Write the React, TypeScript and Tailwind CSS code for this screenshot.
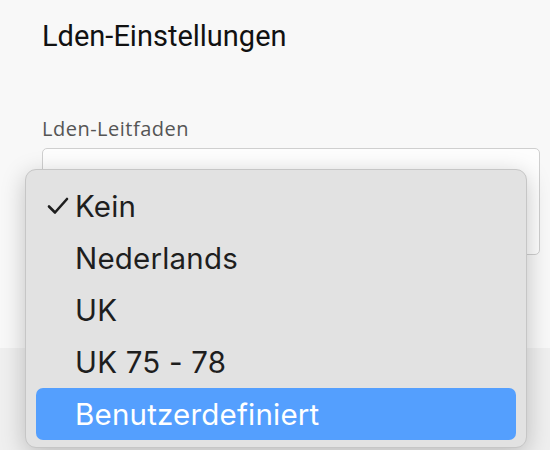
const options = ["Kein", "Nederlands", "UK", "UK 75 - 78", "Benutzerdefiniert"];

function Check() {
  return (
    <svg width="22" height="18" viewBox="0 0 22 18" className="text-[#1e1e1e]">
      <path d="M2 9.5 L8 15.5 L20 2" fill="none" stroke="currentColor" strokeWidth="2.6" strokeLinecap="round" strokeLinejoin="round" />
    </svg>
  );
}

function OptionMenu({ selected, active }: { selected: string; active: string }) {
  return (
    <div className="absolute left-[25px] top-[169px] h-[279px] w-[502px] rounded-[11px] border border-[#c6c6c6] bg-[#e2e2e2] px-[10px] pt-[10px] shadow-[0_6px_24px_rgba(0,0,0,0.22)]">
      {options.map((opt) => {
        const isActive = opt === active;
        return (
          <div
            key={opt}
            className={`flex h-[52px] items-center rounded-[7px] ${isActive ? "bg-[#549ffe] text-white" : "text-[#1e1e1e]"}`}
          >
            <span className="flex w-[39px] justify-end pr-[6px]">{opt === selected && <Check />}</span>
            <span className="font-['Inter',sans-serif] text-[29.5px] tracking-[0.2px]">{opt}</span>
          </div>
        );
      })}
    </div>
  );
}

export default function App() {
  return (
    <div className="relative h-[450px] w-[550px] overflow-hidden bg-[#f8f8f8]">
      <div className="flex h-[348px] flex-col pl-[42px] pr-[10px]">
        <h1 className="mt-[16px] font-['Roboto',sans-serif] text-[29px] leading-[40px] text-[#111]">Lden-Einstellungen</h1>
        <label className="mt-[60px] font-['Open_Sans',sans-serif] text-[20px] leading-[26px] tracking-[0.5px] text-[#555]">Lden-Leitfaden</label>
        <div className="mt-[6px] h-[107px] rounded-[5px] border border-[#cfcfcf] bg-[#fdfdfd]" />
      </div>
      <div className="h-[102px] bg-[#efefef]" />
      <OptionMenu selected="Kein" active="Benutzerdefiniert" />
    </div>
  );
}
